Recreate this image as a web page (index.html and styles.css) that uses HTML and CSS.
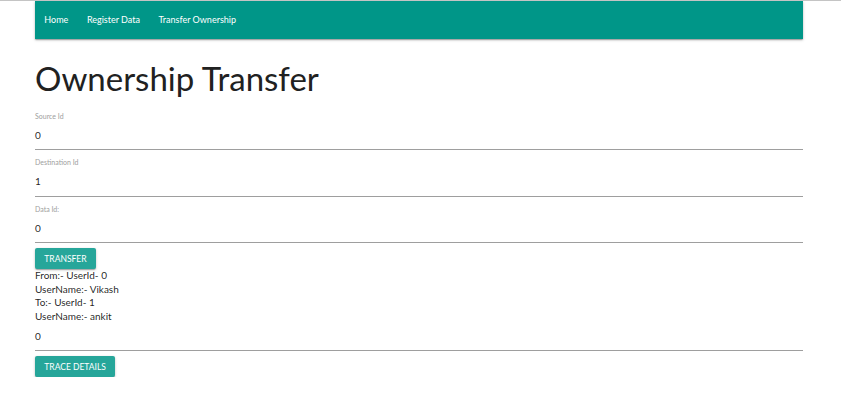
FILE: index.html
```html
<!DOCTYPE html>
<html lang="en">
<head>
<meta charset="utf-8">
<title>Ownership Transfer</title>
<link rel="stylesheet" href="styles.css">
</head>
<body>
<div class="container">
  <nav class="navbar">
    <ul class="nav-links">
      <li><a href="#">Home</a></li>
      <li><a href="#">Register Data</a></li>
      <li><a href="#">Transfer Ownership</a></li>
    </ul>
  </nav>

  <h1 class="title">Ownership Transfer</h1>

  <form class="form">
    <div class="field">
      <label class="field-label">Source Id</label>
      <div class="field-value">0</div>
    </div>
    <div class="field">
      <label class="field-label">Destination Id</label>
      <div class="field-value">1</div>
    </div>
    <div class="field">
      <label class="field-label">Data Id:</label>
      <div class="field-value">0</div>
    </div>
  </form>

  <button class="btn btn-transfer" type="button">Transfer</button>

  <div class="result">
    <div>From:- UserId- 0</div>
    <div>UserName:- Vikash</div>
    <div>To:- UserId- 1</div>
    <div>UserName:- ankit</div>
  </div>

  <div class="field field-plain">
    <div class="field-value">0</div>
  </div>

  <button class="btn btn-trace" type="button">Trace Details</button>
</div>
</body>
</html>
```

FILE: styles.css
```css
html, body {
  margin: 0;
  padding: 0;
  background: #ffffff;
}

body {
  border-top: 1px solid #c4c4c4;
  font-family: Lato, "Open Sans", sans-serif;
  color: rgba(0, 0, 0, 0.87);
}

.container {
  width: 768px;
  margin-left: 35px;
}

.navbar {
  height: 38px;
  background: #009688;
  box-shadow: 0 1px 1px 0 rgba(0, 0, 0, 0.14), 0 2px 1px -1px rgba(0, 0, 0, 0.12), 0 1px 3px 0 rgba(0, 0, 0, 0.2);
}

.nav-links {
  list-style: none;
  margin: 0;
  padding: 0;
  display: flex;
}

.nav-links a {
  display: block;
  padding: 0 9.3px;
  line-height: 38px;
  font-size: 9px;
  color: #ffffff;
  text-decoration: none;
}

.title {
  margin: 19px 0 5.5px 0;
  font-size: 33px;
  line-height: 40px;
  font-weight: 400;
  color: #212121;
}

.form {
  margin: 0;
}

.field {
  padding-top: 7px;
  border-bottom: 1px solid #9e9e9e;
}

.field-label {
  display: block;
  font-size: 7px;
  line-height: 10px;
  color: #9e9e9e;
}

.field-value {
  font-size: 10px;
  line-height: 28.5px;
  color: rgba(0, 0, 0, 0.87);
}

.btn {
  display: block;
  height: 21px;
  margin: 5px 0 0 0;
  padding: 0 9.3px;
  border: none;
  border-radius: 2px;
  background: #26a69a;
  color: #ffffff;
  font-family: Lato, "Open Sans", sans-serif;
  font-size: 8.5px;
  text-transform: uppercase;
  letter-spacing: 0;
  box-shadow: 0 1px 1px 0 rgba(0, 0, 0, 0.14), 0 2px 1px -1px rgba(0, 0, 0, 0.12), 0 1px 3px 0 rgba(0, 0, 0, 0.2);
}

.result {
  margin-top: 0;
  font-size: 10px;
  line-height: 13.5px;
  color: rgba(0, 0, 0, 0.87);
}

.field-plain {
  padding-top: 0;
}

.field-plain .field-value {
  line-height: 27px;
}
```
